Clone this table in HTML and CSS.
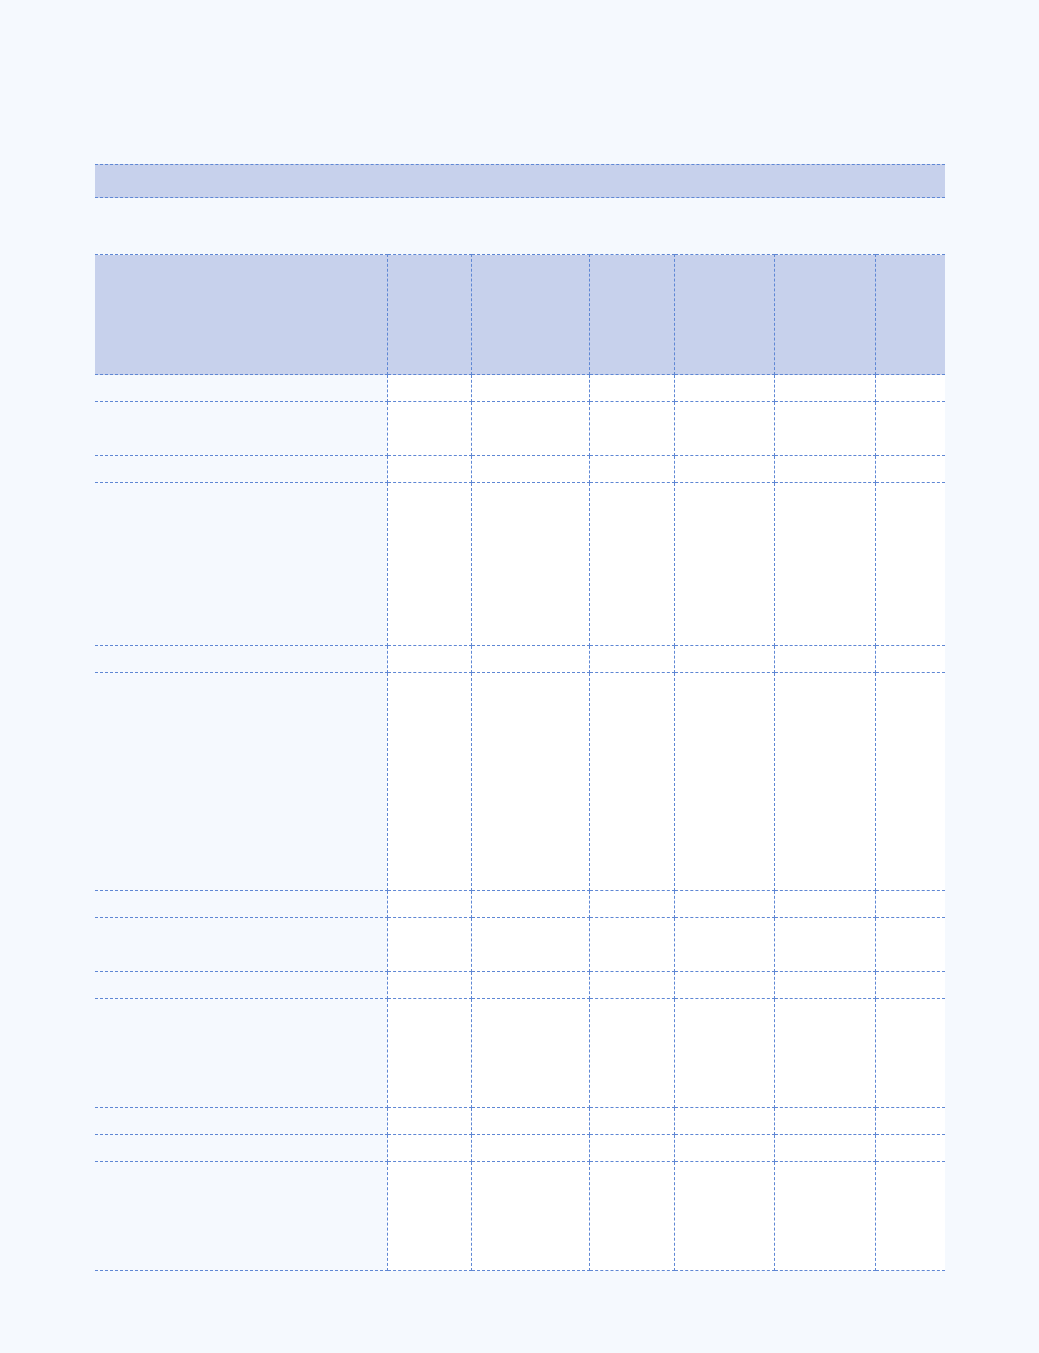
FILE: index.html
```html
<!DOCTYPE html>
<html lang="en">
<head>
<meta charset="utf-8">
<title>Table</title>
<link rel="stylesheet" href="styles.css">
</head>
<body>
<div class="page">
  <div class="caption"></div>
  <table class="grid">
    <colgroup>
      <col class="c1"><col class="c2"><col class="c3"><col class="c4"><col class="c5"><col class="c6"><col class="c7">
    </colgroup>
    <thead>
      <tr class="hd"><th></th><th></th><th></th><th></th><th></th><th></th><th></th></tr>
    </thead>
    <tbody>
      <tr class="h1"><td></td><td></td><td></td><td></td><td></td><td></td><td></td></tr>
      <tr class="h2"><td></td><td></td><td></td><td></td><td></td><td></td><td></td></tr>
      <tr class="h1"><td></td><td></td><td></td><td></td><td></td><td></td><td></td></tr>
      <tr class="h6"><td></td><td></td><td></td><td></td><td></td><td></td><td></td></tr>
      <tr class="h1"><td></td><td></td><td></td><td></td><td></td><td></td><td></td></tr>
      <tr class="h8"><td></td><td></td><td></td><td></td><td></td><td></td><td></td></tr>
      <tr class="h1"><td></td><td></td><td></td><td></td><td></td><td></td><td></td></tr>
      <tr class="h2"><td></td><td></td><td></td><td></td><td></td><td></td><td></td></tr>
      <tr class="h1"><td></td><td></td><td></td><td></td><td></td><td></td><td></td></tr>
      <tr class="h4"><td></td><td></td><td></td><td></td><td></td><td></td><td></td></tr>
      <tr class="h1"><td></td><td></td><td></td><td></td><td></td><td></td><td></td></tr>
      <tr class="h1"><td></td><td></td><td></td><td></td><td></td><td></td><td></td></tr>
      <tr class="h4"><td></td><td></td><td></td><td></td><td></td><td></td><td></td></tr>
    </tbody>
  </table>
</div>
</body>
</html>
```
FILE: styles.css
```css
html, body {
  margin: 0;
  padding: 0;
  background: #f5f9fe;
  font-family: "Liberation Sans", Arial, sans-serif;
}
.page {
  padding: 164px 94px 60px 95px;
  width: 850px;
}
.caption {
  height: 32px;
  background: #c7d1ec;
  border-top: 1px dashed #5f87d4;
  border-bottom: 1px dashed #5f87d4;
}
.grid {
  margin-top: 56px;
  width: 850px;
  border-collapse: collapse;
  table-layout: fixed;
}
.c1 { width: 292px; }
.c2 { width: 84px; }
.c3 { width: 118px; }
.c4 { width: 85px; }
.c5 { width: 100px; }
.c6 { width: 101px; }
.c7 { width: 70px; }
.grid th, .grid td {
  padding: 0;
  border: 1px dashed #5f87d4;
}
.grid th {
  background: #c7d1ec;
}
.grid td {
  background: #ffffff;
}
.grid tr > :first-child {
  border-left: none;
}
.grid tr > :last-child {
  border-right: none;
}
.grid td:first-child {
  background: transparent;
}
.hd { height: 120px; }
.h1 { height: 27px; }
.h2 { height: 54px; }
.h4 { height: 109px; }
.h6 { height: 163px; }
.h8 { height: 218px; }
```
